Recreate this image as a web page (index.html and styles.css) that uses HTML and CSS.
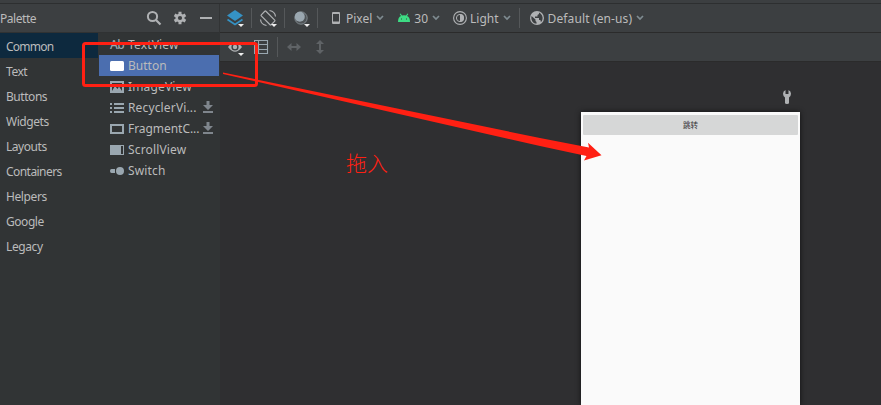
FILE: index.html
```html
<!DOCTYPE html>
<html lang="en">
<head>
<meta charset="utf-8">
<title>Layout Editor</title>
<link rel="stylesheet" href="styles.css">
</head>
<body>
<div class="editor">
  <div class="top-strip"></div>
  <div class="workspace">
    <aside class="palette">
      <header class="palette-header">
        <span class="title">Palette</span>
        <svg class="i-search" width="16" height="16" viewBox="0 0 16 16"><circle cx="6.5" cy="6.5" r="4.6" fill="none" stroke="#afb1b3" stroke-width="2"/><path d="M10 10l4.500 4.500" stroke="#afb1b3" stroke-width="2.200"/></svg>
        <svg class="i-gear" width="14" height="14" viewBox="0 0 14 14"><path d="M5.500.8h3v2l1.300.8 1.900-1 1.500 2.600L11.500 6.300v1.400l1.700 1.100-1.500 2.600-1.900-1-1.300.8v2h-3v-2l-1.300-.8-1.900 1L.8 8.800l1.700-1.100V6.300L.8 5.200l1.500-2.600 1.900 1 1.300-.8z" fill="#afb1b3"/><circle cx="7" cy="7" r="2.100" fill="#3c3f41"/></svg>
        <span class="minimize"></span>
      </header>
      <div class="palette-body">
        <ul class="categories">
          <li class="selected">Common</li><li>Text</li><li>Buttons</li><li>Widgets</li><li>Layouts</li><li>Containers</li><li>Helpers</li><li>Google</li><li>Legacy</li>
        </ul>
        <ul class="components">
          <li><span class="ab">Ab</span><span>TextView</span></li>
          <li class="selected"><svg width="14" height="14"><rect y="2" width="14" height="10" rx="1.500" fill="#fff"/></svg><span>Button</span></li>
          <li><svg width="14" height="14"><path fill-rule="evenodd" d="M0 1h14v12H0zM2 3v8h10V3z" fill="#9aa7b0"/><path d="M2 11l3-5 2.500 3L9 6.500l3 4.500z" fill="#9aa7b0"/></svg><span>ImageView</span></li>
          <li><svg width="14" height="14"><path d="M0 2h2v2H0zM4 2h10v2H4zM0 6h2v2H0zM4 6h10v2H4zM0 10h2v2H0zM4 10h10v2H4z" fill="#9aa7b0"/></svg><span>RecyclerVi...</span><svg class="download" width="10" height="12"><path d="M3.500 0h3v4H10L5 9 0 4h3.500zM0 10h10v2H0z" fill="#7f868d"/></svg></li>
          <li><svg width="14" height="14"><rect x="1" y="3" width="12" height="8" fill="none" stroke="#9aa7b0" stroke-width="2"/></svg><span class="fragment">FragmentC...</span><svg class="download" width="10" height="12"><path d="M3.500 0h3v4H10L5 9 0 4h3.500zM0 10h10v2H0z" fill="#7f868d"/></svg></li>
          <li><svg width="14" height="14"><path fill-rule="evenodd" d="M0 2h14v10H0zM11 3v8h2V3z" fill="#9aa7b0"/></svg><span>ScrollView</span></li>
          <li><svg width="14" height="14"><path d="M1.500 5H5v4H1.500Q0 9 0 7t1.500-2z" fill="#9aa7b0"/><circle cx="10" cy="7" r="4" fill="#9aa7b0"/></svg><span>Switch</span></li>
        </ul>
      </div>
    </aside>
    <main class="design">
      <div class="toolbar primary">
        <svg width="34" height="28"><path d="M15 6l8 5.500-8 5.500-8-5.500z" fill="#3592c4"/><path d="M7.500 15.500l7.500 5 7.500-5" fill="none" stroke="#3592c4" stroke-width="1.800"/><path d="M18 20h6l-3 3z" fill="#eee"/></svg>
        <svg width="33" height="28"><g transform="translate(14 14)" fill="none" stroke="#afb1b3" stroke-width="1.200"><rect x="-3.300" y="-7" width="6.600" height="14" rx=".8" transform="rotate(-45)"/><path d="M1.500-7.500Q7-6.500 7.500-1.500M-1.500 7.500Q-7 6.500-7.500 1.500"/></g><path d="M17 20h6l-3 3z" fill="#eee"/></svg>
        <svg width="33" height="28"><circle cx="14" cy="14" r="6.200" fill="#4f5457" stroke="#8b959c" stroke-width=".8"/><circle cx="12.800" cy="12.800" r="5" fill="#9aa7b0"/><path d="M17 20h6l-3 3z" fill="#eee"/></svg>
        <div class="selector device"><svg width="10" height="14"><path fill-rule="evenodd" d="M2 1h6q1 0 1 1v10q0 1-1 1H2q-1 0-1-1V2q0-1 1-1zM2 3v7.500h6V3z" fill="#afb1b3"/></svg><span>Pixel</span><svg class="chevron" width="8" height="6"><path d="M1 1l3 3 3-3"/></svg></div>
        <div class="selector api"><svg width="14" height="14"><path d="M1 11Q1 6 4 5L2.700 3l.8-.5L5 4.500q2-.7 4 0l1.500-2 .8.5L10 5q3 1 3 6z" fill="#3ddc84"/><path d="M4 7.500h1v1H4zM9 7.500h1v1H9z" fill="#3c3f41"/></svg><span>30</span><svg class="chevron" width="8" height="6"><path d="M1 1l3 3 3-3"/></svg></div>
        <div class="selector theme"><svg width="14" height="14"><circle cx="7" cy="7" r="6.400" fill="none" stroke="#afb1b3" stroke-width="1.100"/><circle cx="7" cy="7" r="3.600" fill="none" stroke="#afb1b3"/><path d="M7 3a4 4 0 0 1 0 8z" fill="#afb1b3"/></svg><span>Light</span><svg class="chevron" width="8" height="6"><path d="M1 1l3 3 3-3"/></svg></div>
        <div class="selector locale"><svg width="14" height="14"><circle cx="7" cy="7" r="7" fill="#afb1b3"/><path d="M1.500 5l4 3.500v1.500l1 1v1.800Q1.500 12 1.300 7zM9 1.500V3L7.500 4v1.500H5V7h4v2h1.500v1.500h1.300Q14 6 10.500 2.500z" fill="#3c3f41"/></svg><span>Default (en-us)</span><svg class="chevron" width="8" height="6"><path d="M1 1l3 3 3-3"/></svg></div>
      </div>
      <div class="toolbar secondary">
        <svg width="34" height="28"><path d="M8 14q7-9.500 14 0-7 9.500-14 0z" fill="#afb1b3"/><circle cx="15" cy="14" r="3.600" fill="#3c3f41"/><circle cx="15" cy="14" r="2.200" fill="#afb1b3"/><path d="M18 20h6l-3 3z" fill="#eee"/></svg>
        <svg width="23" height="28"><path d="M.5 7.500h13v13H.5zM4.500 7v14M4.500 11.500h9M4.500 16.500h9" fill="none" stroke="#9aa7b0" stroke-width="1.100"/></svg>
        <span class="divider"></span>
        <svg class="disabled" width="26" height="28"><path d="M9 14l4.500-4v3h5v-3l4.500 4-4.500 4v-3h-5v3z"/></svg>
        <svg class="disabled" width="26" height="28"><path d="M16 7l4 4h-3v6h3l-4 4-4-4h3v-6h-3z"/></svg>
      </div>
      <section class="canvas">
        <svg class="wrench" width="10" height="14"><path d="M3.500 0v4h3V0Q9 1 9 3.800 9 6 7 7.500V13q0 1-2 1t-2-1V7.500Q1 6 1 3.800 1 1 3.500 0z" fill="#afb1b3"/></svg>
        <div class="device-screen"><div class="preview-button">跳转</div></div>
      </section>
    </main>
  </div>
  <svg class="annotation" width="881" height="405"><rect x="83.500" y="43.500" width="173" height="42" rx="2" fill="none" stroke="#ff2013" stroke-width="3"/><path d="M223 72.500L540 138l49 9.500-1-4.800 13.500 12.600-17.500 5.200 2.500-4.500L540 146 223 74z" fill="#ff2013"/></svg>
  <span class="annotation-text">拖入</span>
</div>
</body>
</html>
```
FILE: styles.css
```css
* { box-sizing: border-box; }
body { margin: 0; background: #2f2f31; color: #bbb; font: 12px/21px "Noto Sans", "Noto Sans CJK SC", sans-serif; overflow: hidden; }
ul { list-style: none; margin: 0; padding: 0; }
svg { display: block; flex: none; }
.editor { position: relative; width: 881px; height: 405px; overflow: hidden; display: flex; flex-direction: column; }
.top-strip { height: 4px; background: #3c3f41; border-bottom: 1px solid #2d2f30; flex: none; }
.workspace { flex: 1; display: flex; min-height: 0; }
.palette { width: 220px; flex: none; background: #313435; display: flex; flex-direction: column; }
.palette-header { height: 29px; display: flex; align-items: center; background: #3c3f41; border-bottom: 1px solid #303233; border-right: 1px solid #323435; padding-right: 7px; }
.title { flex: 1; letter-spacing: -.45px; padding-top: 1px; }
.i-search { margin-right: 11px; }
.i-gear { margin-right: 13px; }
.minimize { width: 12px; height: 2px; background: #afb1b3; }
.palette-body { flex: 1; display: flex; }
.categories { width: 98px; letter-spacing: -.45px; }
.categories li { height: 25px; line-height: 27px; padding-left: 6px; }
.categories li:nth-child(6) { letter-spacing: -.55px; }
.categories li:nth-child(7), .categories li:nth-child(9) { letter-spacing: -.4px; }
.categories .selected { background: #0d293e; letter-spacing: -.75px; }
.components { width: 121px; padding: 1px 0 0 1px; letter-spacing: .15px; }
.components li { height: 21px; display: flex; align-items: center; padding: 0 6px 0 11px; gap: 4px; white-space: nowrap; }
.components .selected { background: #4b6eaf; letter-spacing: 0; }
.ab { width: 14px; color: #9aa7b0; font-weight: 500; letter-spacing: -.5px; }
.components .fragment { width: 69px; letter-spacing: -.05px; }
.components .download { margin: -2px 0 0 auto; }
.design { flex: 1; display: flex; flex-direction: column; }
.toolbar { height: 29px; flex: none; display: flex; background: #3c3f41; border-bottom: 1px solid #2b2b2b; }
.primary > svg { background: linear-gradient(#55585a, #55585a) calc(100% - 2px) 4px / 1px 20px no-repeat; }
.selector { display: flex; align-items: center; gap: 4px; white-space: nowrap; }
.selector span { padding-top: 1px; }
.chevron { fill: none; stroke: #7f8b91; stroke-width: 1.700px; }
.device { margin-left: 11px; }
.device span { margin-left: 1px; }
.api { margin-left: 13px; }
.api span { margin-left: -1px; }
.theme { margin-left: 13px; }
.theme span { margin-left: -1px; }
.locale { border-left: 1px solid #55585a; height: 20px; margin: 4px 0 0 8px; padding-left: 10px; }
.locale span { margin-left: 0; letter-spacing: .12px; }
.divider { width: 1px; height: 20px; margin-top: 4px; background: #55585a; }
.disabled { fill: #5f6366; }
.canvas { flex: 1; display: flex; flex-direction: column; align-items: flex-start; background: #2f2f31; }
.wrench { margin: 28px 0 8px 562px; }
.device-screen { width: 219px; flex: 1; margin-left: 361px; background: #fafafa; box-shadow: 0 0 5px #111; padding: 3px 2px; }
.preview-button { height: 20px; background: #d6d7d7; border-radius: 1px; color: #333; font: 7.500px/20px "Noto Sans CJK SC", sans-serif; text-align: center; }
.annotation { position: absolute; left: 0; top: 0; }
.annotation-text { position: absolute; left: 346px; top: 147px; font: 300 21px/30px "Noto Sans CJK SC", sans-serif; color: #ff2013; }
```
